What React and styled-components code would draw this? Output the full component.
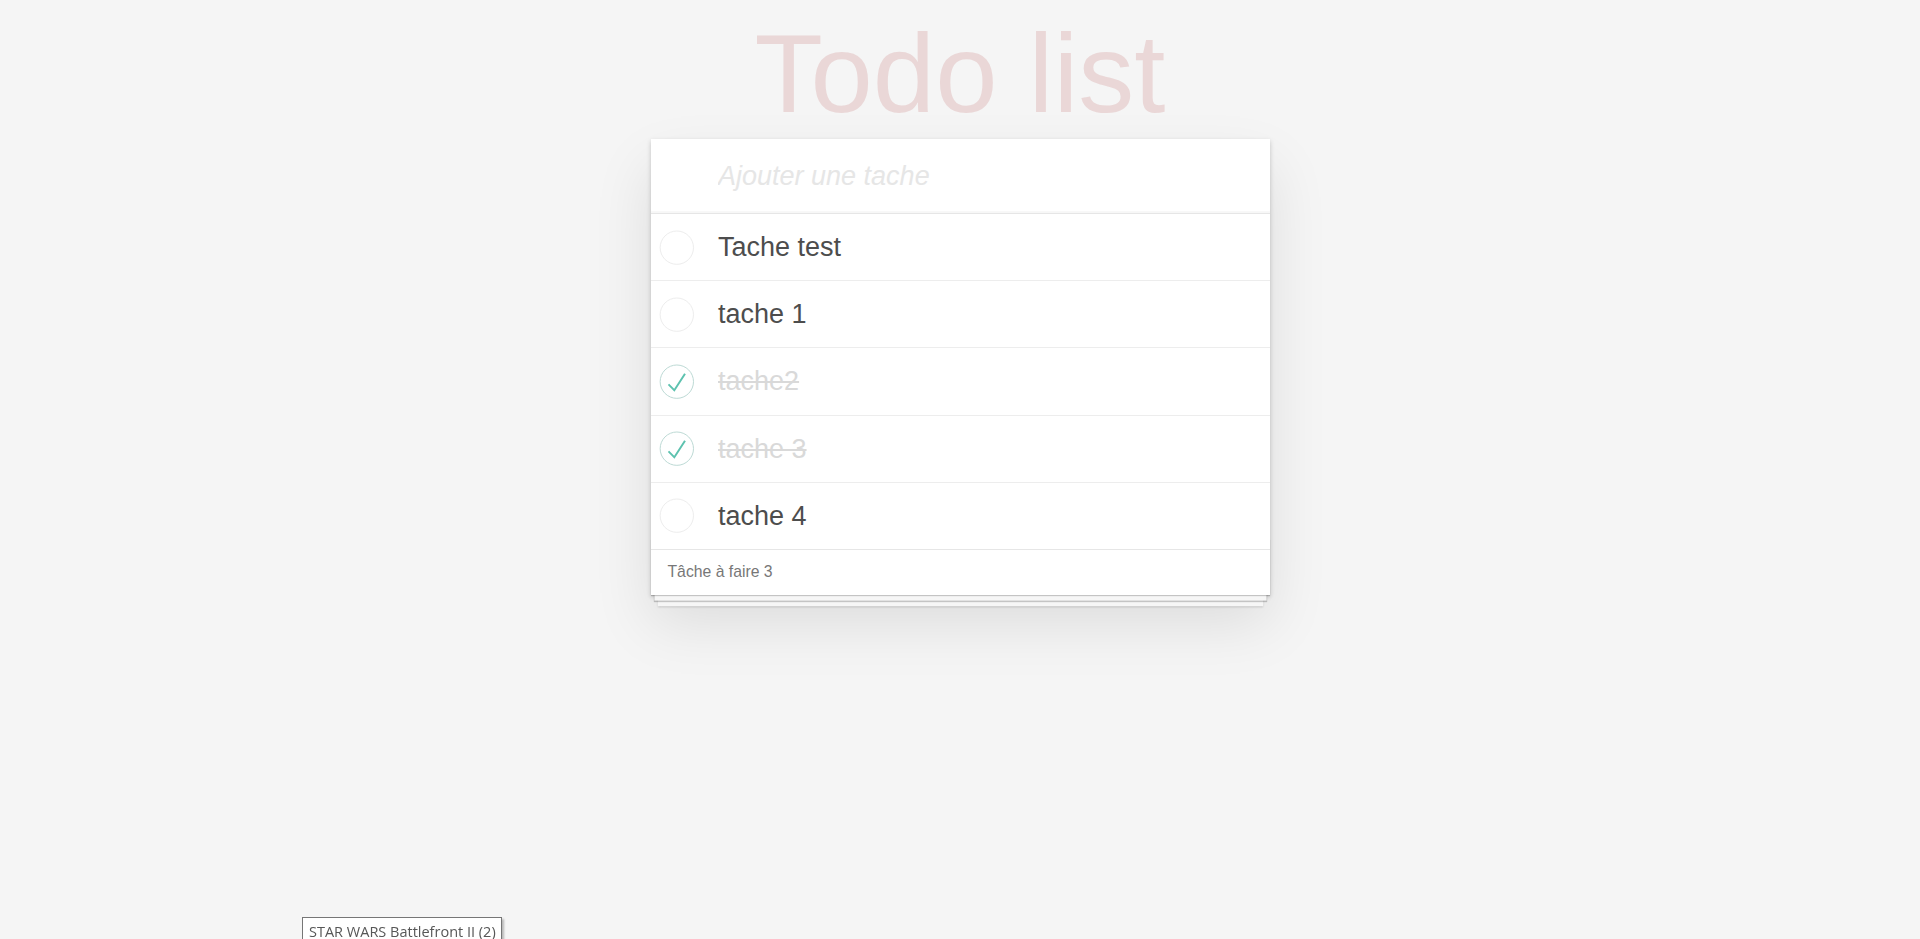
import React from "react"
import styled, { createGlobalStyle } from "styled-components"

const GlobalStyle = createGlobalStyle`
  html, body {
    margin: 0;
    height: 100%;
    overflow: hidden;
    background: #f5f5f5;
    font-family: "Liberation Sans", Arial, sans-serif;
    -webkit-font-smoothing: antialiased;
  }
  * {
    box-sizing: border-box;
  }
`

const Page = styled.div`
  align-items: center;
  display: flex;
  flex-direction: column;
  min-height: 100vh;
`

const Title = styled.h1`
  color: rgba(175, 47, 47, 0.15);
  font-size: 112px;
  font-weight: 400;
  line-height: 112px;
  margin: 0;
  padding-top: 18px;
  text-align: center;
`

const Card = styled.section`
  background: #fff;
  box-shadow: 0 2px 4.5px 0 rgba(0, 0, 0, 0.2), 0 28px 56px 0 rgba(0, 0, 0, 0.1);
  margin-top: 9px;
  position: relative;
  width: 619px;
`

const NewTodo = styled.input`
  background: transparent;
  border: none;
  box-shadow: inset 0 -2px 1px rgba(0, 0, 0, 0.03);
  color: #4d4d4d;
  display: block;
  font-family: inherit;
  font-size: 27px;
  height: 74px;
  line-height: 37.8px;
  outline: none;
  padding: 18px 18px 18px 67.5px;
  width: 100%;
  &::placeholder {
    color: #e6e6e6;
    font-style: italic;
    font-weight: 300;
  }
`

const TodoList = styled.ul`
  border-top: 1px solid #e6e6e6;
  list-style: none;
  margin: 0;
  padding: 0;
`

const Item = styled.li`
  align-items: center;
  border-bottom: 1px solid #ededed;
  display: flex;
  font-size: 27px;
  &:last-child {
    border-bottom: none;
  }
`

const Toggle = styled.svg`
  flex: none;
  height: 45px;
  width: 45px;
`

const Label = styled.label`
  color: ${props => (props.done ? "#d9d9d9" : "#4d4d4d")};
  display: block;
  flex: 1;
  line-height: 32.2px;
  padding: 17px 17px 17px 22.5px;
  text-decoration: ${props => (props.done ? "line-through" : "none")};
`

const Footer = styled.footer`
  border-top: 1px solid #e6e6e6;
  color: #777;
  font-size: 15.75px;
  height: 46px;
  line-height: 22px;
  padding: 11px 17px;
  position: relative;
  &::before {
    bottom: 0;
    box-shadow: 0 1px 1px rgba(0, 0, 0, 0.2), 0 9px 0 -3.4px #f6f6f6,
      0 10px 1px -3.4px rgba(0, 0, 0, 0.2), 0 18px 0 -6.75px #f6f6f6,
      0 19px 2px -6.75px rgba(0, 0, 0, 0.2);
    content: "";
    height: 56px;
    left: 0;
    overflow: hidden;
    position: absolute;
    right: 0;
  }
`

const Count = styled.span`
  position: relative;
`

const Tooltip = styled.div`
  background: #fff;
  border: 1px solid #767676;
  box-shadow: 2px 2px 2px rgba(0, 0, 0, 0.25);
  color: #575757;
  font-family: "Open Sans", "Noto Sans", sans-serif;
  font-size: 14.5px;
  left: 302px;
  line-height: 17px;
  padding: 5px 5px 4px 6px;
  position: fixed;
  top: 917px;
  white-space: nowrap;
`

const todos = [
  { text: "Tache test", done: false },
  { text: "tache 1", done: false },
  { text: "tache2", done: true },
  { text: "tache 3", done: true },
  { text: "tache 4", done: false },
]

const CheckIcon = ({ done }) => (
  <Toggle viewBox="-10 -18 100 135">
    <circle
      cx="50"
      cy="50"
      r="50"
      fill="none"
      stroke={done ? "#bddad5" : "#ededed"}
      strokeWidth="3"
    />
    {done && <path fill="#5dc2af" d="M72 25L42 71 27 56l-4 4 20 20 34-52z" />}
  </Toggle>
)

const App = () => {
  const left = todos.filter(t => !t.done).length
  return (
    <Page>
      <GlobalStyle />
      <Title>Todo list</Title>
      <Card>
        <NewTodo placeholder="Ajouter une tache" />
        <TodoList>
          {todos.map(todo => (
            <Item key={todo.text}>
              <CheckIcon done={todo.done} />
              <Label done={todo.done}>{todo.text}</Label>
            </Item>
          ))}
        </TodoList>
        <Footer>
          <Count>Tâche à faire {left}</Count>
        </Footer>
      </Card>
      <Tooltip>STAR WARS Battlefront II (2)</Tooltip>
    </Page>
  )
}

export default App
